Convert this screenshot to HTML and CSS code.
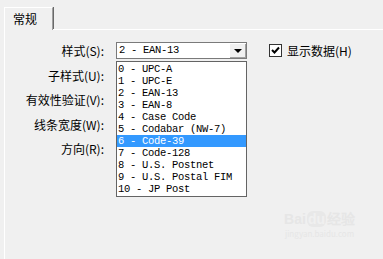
FILE: index.html
```html
<!DOCTYPE html>
<html lang="zh-CN">
<head>
    <meta charset="UTF-8">
    <title>常规</title>
    <link rel="stylesheet" href="styles.css">
</head>
<body>
    <div class="tabs">
        <div class="tab">常规</div>
        <div class="tab-line"></div>
    </div>

    <div class="panel">
        <div class="labels">
            <div class="label">样式(S):</div>
            <div class="label">子样式(U):</div>
            <div class="label">有效性验证(V):</div>
            <div class="label">线条宽度(W):</div>
            <div class="label">方向(R):</div>
        </div>

        <div class="combo-wrap">
            <div class="combo">
                <span class="combo-text">2 - EAN-13</span>
                <span class="combo-btn"><span class="arrow"></span></span>
            </div>
            <ul class="list">
                <li>0 - UPC-A</li>
                <li>1 - UPC-E</li>
                <li>2 - EAN-13</li>
                <li>3 - EAN-8</li>
                <li>4 - Case Code</li>
                <li>5 - Codabar (NW-7)</li>
                <li class="selected">6 - Code-39</li>
                <li>7 - Code-128</li>
                <li>8 - U.S. Postnet</li>
                <li>9 - U.S. Postal FIM</li>
                <li>10 - JP Post</li>
            </ul>
        </div>

        <label class="check">
            <span class="box">
                <svg width="9" height="9" viewBox="0 0 9 9"><path d="M1 4 L3.5 6.5 L8 1.5" fill="none" stroke="#000" stroke-width="2"/></svg>
            </span>
            显示数据(H)
        </label>

        <div class="watermark">
            <div class="wm-logo">Bai<span class="wm-du">du</span>经验</div>
            <div class="wm-url">jingyan.baidu.com</div>
        </div>
    </div>
</body>
</html>
```

FILE: styles.css
```css
body {
    margin: 0;
    background: #f0f0f0;
    font-family: "Noto Sans CJK SC", "Liberation Sans", sans-serif;
    font-size: 12px;
    color: #000;
    width: 383px;
    height: 259px;
    overflow: hidden;
}
.tabs {
    display: flex;
    align-items: flex-end;
    padding: 6px 0 0 4px;
    height: 24px;
}
.tab {
    width: 49px;
    height: 23px;
    border-top: 1px solid #ffffff;
    border-left: 1px solid #ffffff;
    border-right: 1px solid #a0a0a0;
    box-shadow: 1px 0 0 #696969;
    padding-left: 8px;
    line-height: 22px;
    box-sizing: border-box;
}
.tab-line {
    flex: 1;
    border-bottom: 1px solid #ffffff;
}
.panel {
    position: relative;
    margin-left: 4px;
    height: 229px;
    border-left: 1px solid #ffffff;
    display: flex;
}
.labels {
    display: flex;
    flex-direction: column;
    gap: 7.5px;
    width: 99px;
    padding-top: 12px;
    text-align: right;
}
.label {
    height: 17px;
    line-height: 17px;
}
.combo-wrap {
    position: relative;
    margin: 12px 0 0 12px;
    width: 131px;
}
.combo {
    display: flex;
    height: 17px;
    border: 1px solid #7a7a7a;
    background: #fff;
    box-sizing: border-box;
    font-family: "Liberation Mono", monospace;
    font-size: 10.5px;
    letter-spacing: -0.3px;
}
.combo-text {
    flex: 1;
    padding-left: 2px;
    line-height: 15px;
}
.combo-btn {
    width: 16px;
    background: #f0f0f0;
    border-left: 1px solid #fff;
    border-top: 1px solid #fff;
    box-shadow: inset -1px -1px 0 #a0a0a0;
    display: flex;
    align-items: center;
    justify-content: center;
}
.arrow {
    width: 0;
    height: 0;
    border-left: 4px solid transparent;
    border-right: 4px solid transparent;
    border-top: 4px solid #000;
}
.list {
    position: absolute;
    top: 19px;
    left: 0;
    width: 131px;
    margin: 0;
    padding: 1px 0;
    list-style: none;
    background: #fff;
    border: 1px solid #646464;
    box-sizing: border-box;
    font-family: "Liberation Mono", monospace;
    font-size: 10.5px;
    letter-spacing: -0.3px;
}
.list li {
    height: 12px;
    line-height: 12px;
    padding-left: 1px;
    white-space: nowrap;
}
.list .selected {
    background: #3399ff;
    color: #fff;
}
.check {
    display: flex;
    align-items: center;
    gap: 5px;
    height: 17px;
    margin: 12px 0 0 22px;
}
.box {
    width: 11px;
    height: 11px;
    border: 1px solid #333;
    background: #fff;
    display: flex;
    align-items: center;
    justify-content: center;
}
.watermark {
    position: absolute;
    right: 28px;
    bottom: 20px;
    color: #e6e6e6;
    text-align: center;
}
.wm-logo {
    font-family: "Liberation Sans", sans-serif;
    font-size: 14px;
    font-weight: bold;
}
.wm-du {
    display: inline-block;
    background: #e8e8e8;
    color: #f0f0f0;
    border-radius: 6px;
    padding: 0 1px;
    margin: 0 1px;
}
.wm-url {
    font-size: 8px;
}
```
